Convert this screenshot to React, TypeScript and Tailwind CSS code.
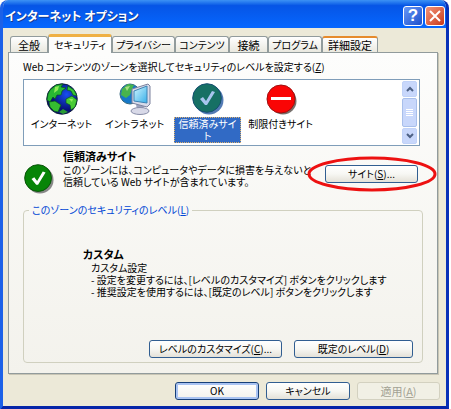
import React from "react";

const tabs = [
  { label: "全般", width: "w-[38px] text-[11px]" },
  { label: "セキュリティ", width: "w-[64px]" },
  { label: "プライバシー", width: "w-[63px]" },
  { label: "コンテンツ", width: "w-[54px]" },
  { label: "接続", width: "w-[39px] text-[11px]" },
  { label: "プログラム", width: "w-[54px]" },
  { label: "詳細設定", width: "w-[56px] text-[11px]" },
];

function Globe() {
  return (
    <svg viewBox="0 0 32 32" className="h-8 w-8" aria-hidden="true">
      <defs>
        <radialGradient id="sea" cx=".65" cy=".35">
          <stop offset="0" stopColor="#174ff0" />
          <stop offset="1" stopColor="#071078" />
        </radialGradient>
      </defs>
      <circle cx="16" cy="16" r="15.3" fill="url(#sea)" stroke="#071428" strokeWidth=".8" />
      <path d="M4 7L10 2L17 1L15 4L20 5L16 8L15 12L11 12L9 16L7 14L4 19L1 17L2 11Z" fill="#28b832" stroke="#07551c" strokeWidth=".7" />
      <path d="M22 3L28 7L31 13L27 12L25 8L21 7Z" fill="#35c632" stroke="#07551c" strokeWidth=".7" />
      <path d="M20 16L26 13L31 17L29 24L25 27L24 22L20 20Z" fill="#48cb35" stroke="#07551c" strokeWidth=".7" />
      <path d="M3 19L9 18L15 22L12 29L8 28L4 24Z" fill="#35bd30" stroke="#07551c" strokeWidth=".7" />
      <path d="M17 26L22 29L17 31L13 29Z" fill="#299b34" />
      <path d="M9 4L13 3L12 7L8 10Z M23 16L27 16L26 19Z" fill="#91eb59" />
    </svg>
  );
}

function Intranet() {
  return (
    <svg viewBox="0 0 32 32" className="h-8 w-8" aria-hidden="true">
      <defs>
        <linearGradient id="lcd" x1="0" y1="0" x2="1" y2="1">
          <stop stopColor="#d1f6ff" />
          <stop offset="1" stopColor="#38afe9" />
        </linearGradient>
      </defs>
      <circle cx="11" cy="11" r="10" fill="#1678c8" stroke="#386b82" />
      <path d="M3 6L9 1L15 2L13 6L11 12L7 15L2 12Z" fill="#48b44c" />
      <path d="M6 4L11 3L8 8Z" fill="#a7df83" />
      <path d="M17 21L25 23L24 28H18Z" fill="#9aa2bf" />
      <ellipse cx="21" cy="28" rx="9" ry="3.5" fill="#d8d9e8" stroke="#878ca7" />
      <path d="M13 6L29 1L31 3V21L28 24L13 20Z" fill="#d8dbea" stroke="#7c829e" />
      <path d="M15 8L28 3V20L15 18Z" fill="url(#lcd)" stroke="#3e83b4" />
    </svg>
  );
}

function Check({ selected = false }: { selected?: boolean }) {
  return (
    <svg viewBox="0 0 32 32" className={selected ? "h-8 w-8" : "h-[30px] w-[30px]"} aria-hidden="true">
      <circle cx="17" cy="17" r="14.5" fill={selected ? "#547bb5" : "#888888"} />
      <circle cx="15" cy="15" r="14.3" fill={selected ? "#167064" : "#078507"} stroke={selected ? "#164f70" : "#075007"} />
      <path d="M8 16L11 14L14 18L20 8L23 9L15 22H13Z" fill={selected ? "#a7c5ee" : "white"} />
    </svg>
  );
}

function Restricted() {
  return (
    <svg viewBox="0 0 32 32" className="h-8 w-8" aria-hidden="true">
      <circle cx="18" cy="18" r="13.5" fill="#77706c" />
      <circle cx="16" cy="16" r="14" fill="#fa0505" stroke="#9e1010" />
      <path d="M6 14H26V17H6Z" fill="white" />
    </svg>
  );
}

const zones = [
  { label: "インターネット", icon: <Globe /> },
  { label: "イントラネット", icon: <Intranet /> },
  { label: <>信頼済みサイ<br />ト</>, icon: <Check selected />, selected: true },
  { label: "制限付きサイト", icon: <Restricted /> },
];

function PushButton({ children, className = "", disabled = false, primary = false }: {
  children: React.ReactNode; className?: string; disabled?: boolean; primary?: boolean;
}) {
  const look = disabled
    ? "border-[#d3d1c0] bg-[#f1f0e5] text-[#a3a294]"
    : primary
      ? "border-[#163f78] bg-linear-to-b from-white to-[#f2f1ec] shadow-[inset_0_0_0_2px_#a9c3f2]"
      : "border-[#315e91] bg-linear-to-b from-white via-[#f7f7f3] to-[#e4e1d8]";
  return (
    <button type="button" disabled={disabled} className={`h-[18px] shrink-0 rounded-[3px] border text-center leading-4 whitespace-nowrap ${look} ${className}`}>
      {children}
    </button>
  );
}

export default function App() {
  return (
    <div className="w-full bg-white pr-[2px] font-['Noto_Sans_CJK_JP',sans-serif] text-[10px] leading-3 text-black [font-feature-settings:'palt']">
      <main className="overflow-hidden rounded-t-lg border-x-[3px] border-b-4 border-r-[#0830b8] border-b-[#0525a8] border-l-[#1c61e8] bg-[#ece9d8]">
        <header className="flex h-7 items-center justify-between bg-linear-to-b from-[#3c91f4] via-[#0655e6] via-20% to-[#0667ff] pt-1 pr-px pl-[2px] text-white">
          <h1 className="text-[12px] leading-5 font-bold whitespace-nowrap [text-shadow:1px_1px_#143c92]">インターネット オプション</h1>
          <div className="flex gap-[2px]">
            <button type="button" aria-label="ヘルプ" className="flex h-5 w-5 items-center justify-center rounded-[3px] border border-white bg-linear-to-br from-[#6898f7] to-[#1c4dcb] font-['Liberation_Sans',sans-serif] text-[17px] font-bold">?</button>
            <button type="button" aria-label="閉じる" className="flex h-5 w-5 items-center justify-center rounded-[3px] border border-white bg-linear-to-br from-[#f29278] to-[#c83614]">
              <svg viewBox="0 0 12 12" className="h-3 w-3"><path d="M1 1L11 11M11 1L1 11" stroke="white" strokeWidth="2" /></svg>
            </button>
          </div>
        </header>

        <div className="pt-[6px] pr-2 pl-[5px]">
          <div role="tablist" className="flex h-[18px] items-end pl-[2px]">
            {tabs.map((tab, index) => (
              <button key={tab.label} type="button" role="tab" aria-selected={index === 1}
                className={`${tab.width} shrink-0 rounded-t-[3px] border border-b-0 border-[#919b9c] whitespace-nowrap ${
                  index === 1 ? "z-10 -mb-px h-[19px] border-t-[3px] border-t-[#efb044] bg-[#fdfdfc]"
                    : index === 6 ? "h-4 border-t-2 border-t-[#e68b2c] bg-linear-to-b from-white to-[#ebe9df]"
                      : "h-4 bg-linear-to-b from-white to-[#e9e8df]"
                }`}>
                {tab.label}
              </button>
            ))}
          </div>

          <section className="border border-[#919b9c] bg-linear-to-b from-[#fdfdfc] to-[#f3f2ec] px-[14px] pt-[6px] pb-[10px] shadow-[1px_1px_#c8c5b5]">
            <p className="whitespace-nowrap leading-4">Web コンテンツのゾーンを選択してセキュリティのレベルを設定する(<u>Z</u>)</p>

            <div className="mt-1 mr-[3px] flex h-[67px] border border-[#7f9db9] bg-white">
              <div role="listbox" aria-label="ゾーン" className="flex flex-1 items-start pt-[3px] pl-px">
                {zones.map((zone, index) => (
                  <button key={index} type="button" role="option" aria-selected={!!zone.selected} className="flex w-[73px] shrink-0 flex-col items-center px-[3px]">
                    {zone.icon}
                    <span className={`mt-[2px] ${zone.selected ? "w-full border border-dotted border-[#dbb270] bg-[#316ac5] text-white" : "pt-px whitespace-nowrap"}`}>{zone.label}</span>
                  </button>
                ))}
              </div>
              <div className="my-px mr-[2px] flex w-[15px] flex-col gap-px">
                <button type="button" aria-label="上へ" className="flex h-4 items-center justify-center rounded-xs border border-[#c0d2f8] bg-[#c8d7fb]">
                  <svg viewBox="0 0 8 6" className="h-[6px] w-2"><path d="M1 5L4 2L7 5" fill="none" stroke="#4d6185" strokeWidth="2" /></svg>
                </button>
                <button type="button" aria-label="スクロール" className="flex flex-1 flex-col items-center justify-center gap-px rounded-xs border border-[#a8bfeb] bg-[#c8d7fb]">
                  <span className="h-px w-[7px] bg-white" /><span className="h-px w-[7px] bg-white" /><span className="h-px w-[7px] bg-white" /><span className="h-px w-[7px] bg-white" />
                </button>
                <button type="button" aria-label="下へ" className="flex h-4 items-center justify-center rounded-xs border border-[#c0d2f8] bg-[#c8d7fb]">
                  <svg viewBox="0 0 8 6" className="h-[6px] w-2"><path d="M1 1L4 4L7 1" fill="none" stroke="#4d6185" strokeWidth="2" /></svg>
                </button>
              </div>
            </div>

            <div className="mt-[2px] flex h-[54px]">
              <div className="w-10 shrink-0 pt-4 pl-px"><Check /></div>
              <div className="min-w-0 flex-1 whitespace-nowrap">
                <h2 className="text-[11px] leading-4 font-bold">信頼済みサイト</h2>
                <p>このゾーンには、コンピュータやデータに損害を与えないと</p>
                <p>信頼している Web サイトが含まれています。</p>
              </div>
              <div className="relative mt-[17px] mr-[5px] h-[18px]">
                <PushButton className="w-[93px]">サイト(<u>S</u>)...</PushButton>
                <svg viewBox="0 0 130 38" className="pointer-events-none absolute -top-[10px] -left-[18px] h-[38px] w-[130px]" aria-hidden="true"><ellipse cx="65" cy="19" rx="63" ry="16" fill="none" stroke="#ed1111" strokeWidth="3" /></svg>
              </div>
            </div>

            <fieldset className="rounded border border-[#d0d0bf] pt-[30px] pr-[9px] pb-1">
              <legend className="ml-[5px] h-4 px-[3px] leading-4 text-[#0046d5]">このゾーンのセキュリティのレベル(<u>L</u>)</legend>
              <div className="pl-[59px] whitespace-nowrap">
                <h2 className="text-[11px] font-bold">カスタム</h2>
                <div className="mt-[2px] pl-2">
                  <p>カスタム設定</p>
                  <p>- 設定を変更するには、[レベルのカスタマイズ] ボタンをクリックします</p>
                  <p>- 推奨設定を使用するには、[既定のレベル] ボタンをクリックします</p>
                </div>
              </div>
              <div className="mt-[42px] flex justify-end gap-3">
                <PushButton className="w-[133px]">レベルのカスタマイズ(<u>C</u>)...</PushButton>
                <PushButton className="w-[119px]">既定のレベル(<u>D</u>)</PushButton>
              </div>
            </fieldset>
          </section>
        </div>

        <footer className="flex justify-end gap-[7px] pt-2 pr-[6px] pb-[6px]">
          <PushButton primary className="w-[84px]">OK</PushButton>
          <PushButton className="w-[84px]">キャンセル</PushButton>
          <PushButton disabled className="w-[83px] text-[11px]">適用(<u>A</u>)</PushButton>
        </footer>
      </main>
    </div>
  );
}
